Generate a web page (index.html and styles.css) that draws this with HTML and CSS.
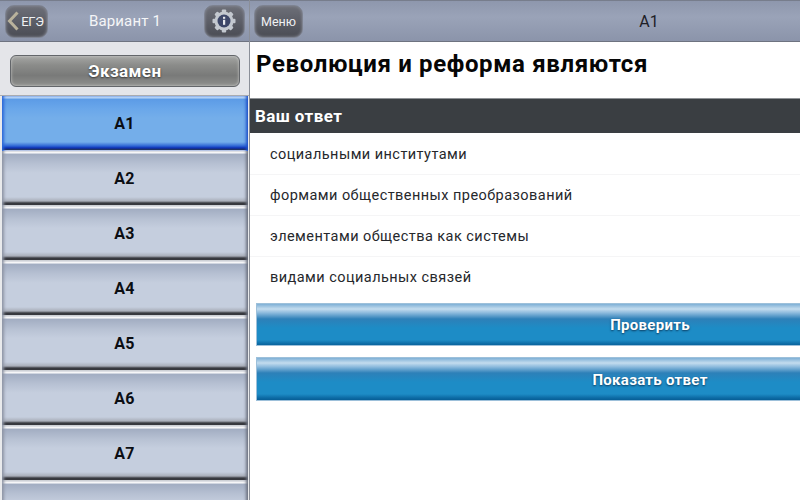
FILE: index.html
```html
<!DOCTYPE html>
<html lang="ru">
<head>
<meta charset="utf-8">
<title>Вариант 1</title>
<link rel="stylesheet" href="styles.css">
</head>
<body>
<div class="app">
  <aside class="side">
    <header class="bar side-bar">
      <button class="tool back">
        <svg class="chev" width="12" height="22" viewBox="0 0 12 22"><path d="M10.5 2.5 2.5 11l8 8.5" fill="none" stroke="#b9b29c" stroke-width="3"/></svg>
        <span>ЕГЭ</span>
      </button>
      <div class="bar-title">Вариант 1</div>
      <button class="tool gear">
        <svg width="28" height="26" viewBox="0 0 28 26">
          <g fill="#c3c8cf" transform="translate(0 -1)">
            <circle cx="14" cy="14" r="9.5"/>
            <rect x="11.8" y="2.5" width="4.4" height="23" rx="1"/>
            <rect x="11.8" y="2.5" width="4.4" height="23" rx="1" transform="rotate(45 14 14)"/>
            <rect x="11.8" y="2.5" width="4.4" height="23" rx="1" transform="rotate(90 14 14)"/>
            <rect x="11.8" y="2.5" width="4.4" height="23" rx="1" transform="rotate(135 14 14)"/>
            <circle cx="14" cy="14" r="6.5" fill="#3c4668"/>
            <rect x="13" y="12.8" width="2.2" height="5" fill="#e8eaee"/>
            <rect x="13" y="9.8" width="2.2" height="2" fill="#e8eaee"/>
          </g>
        </svg>
      </button>
    </header>
    <div class="exam-wrap"><button class="exam">Экзамен</button></div>
    <nav class="list">
      <div class="item active">A1</div>
      <div class="item">A2</div>
      <div class="item">A3</div>
      <div class="item">A4</div>
      <div class="item">A5</div>
      <div class="item">A6</div>
      <div class="item">A7</div>
      <div class="item"></div>
    </nav>
  </aside>
  <main class="main">
    <header class="bar main-bar">
      <button class="tool menu">Меню</button>
      <div class="main-title">A1</div>
    </header>
    <h1 class="question">Революция и реформа являются</h1>
    <h2 class="answer-head">Ваш ответ</h2>
    <ul class="answers">
      <li>социальными институтами</li>
      <li>формами общественных преобразований</li>
      <li>элементами общества как системы</li>
      <li>видами социальных связей</li>
    </ul>
    <div class="actions">
      <button class="action short">Проверить</button>
      <button class="action">Показать ответ</button>
    </div>
  </main>
</div>
</body>
</html>
```

FILE: styles.css
```css
* { box-sizing: border-box; }
html, body { margin: 0; height: 100%; }
body { font-family: Roboto, "Liberation Sans", sans-serif; background: #fff; overflow: hidden; }
button { font-family: inherit; margin: 0; padding: 0; cursor: pointer; }

.app { display: flex; width: 800px; height: 500px; overflow: hidden; }

.side { flex: 0 0 249px; width: 249px; height: 500px; display: flex; flex-direction: column; background: #e4e5e9; overflow: hidden; }
.main { flex: 0 0 551px; width: 551px; height: 500px; display: flex; flex-direction: column; background: #fff; overflow: hidden; border-left: 1px solid #8b8f98; }

.bar { height: 42px; flex: none; display: flex; align-items: center; background: linear-gradient(#8e97ad, #9aa3b8 40%, #8b94aa); border-bottom: 1px solid #6e7380; border-top: 1px solid #777d8c; }
.side-bar { padding: 0 4px 0 5px; justify-content: space-between; }
.main-bar { padding-left: 4px; }

.tool { height: 33px; border: 1px solid #7e8391; border-radius: 9px; background: linear-gradient(#6d6f78, #5c5e67 50%, #4a4c54); color: #f0f1f3; font-size: 13px; display: flex; align-items: center; justify-content: center; box-shadow: inset 0 0 3px #8b8e98; }
.back { width: 43px; font-size: 13px; gap: 2px; padding-right: 2px; }
.back span { letter-spacing: -.3px; }
.chev { flex: none; }
.gear { width: 41px; }
.menu { width: 49px; font-size: 12.5px; }
.bar-title { color: #f4f5f7; font-size: 15px; letter-spacing: .15px; margin-right: 2px; }
.main-title { flex: 1; text-align: center; color: #1e2026; font-size: 16px; padding-left: 195px; }

.exam-wrap { height: 54px; flex: none; display: flex; align-items: flex-start; padding: 13px 9px 0 10px; border-bottom: 1px solid #a9abb0; }
.exam { width: 230px; height: 32px; border: 1px solid #63666a; border-radius: 6px; background: linear-gradient(#a6a7a5, #8b8c8a 30%, #797a79 65%, #8e8f8d); color: #fff; font-size: 17px; font-weight: 700; letter-spacing: .4px; text-shadow: 0 1px 2px #333; box-shadow: inset 0 0 3px #cfd0ce; }

.list { flex: 1; display: flex; flex-direction: column; padding: 0 1px 0 2px; background: #e9eaec; overflow: hidden; }
.item { flex: none; height: 55px; display: flex; align-items: center; justify-content: center; padding-bottom: 1px; padding-right: 1px; color: #0b0d12; font-size: 16px; font-weight: 700; letter-spacing: .3px; background: linear-gradient(#fff 0 2px, #a2adc2 3px, #b7c1d3 13px, #c5cede 22px, #c5cede 46px, #a9aeb9 50px, #3a3c42 52px, #2f3036 54px, #e9eaec 54px); box-shadow: inset 3px 0 3px -1px #8e95a5, inset -3px 0 3px -1px #6c7280; }
.item.active { background: linear-gradient(#bcd8f8 0 2px, #5c9be6 3px, #6aa7ea 13px, #74aeea 22px, #74aeea 46px, #2e66d4 50px, #0b2fb4 52px, #2a3042 54px, #e9eaec 54px); box-shadow: inset 3px 0 3px -1px #2c68d8, inset -3px 0 3px -1px #1f52c8; }

.question { margin: 0; height: 56px; flex: none; padding: 6px 0 0 6px; font-size: 24px; line-height: 32px; font-weight: 700; color: #060606; letter-spacing: .63px; white-space: nowrap; }

.answer-head { margin: 0; height: 35px; flex: none; display: flex; align-items: center; padding-left: 5px; background: #3a3e42; color: #fff; font-size: 17px; font-weight: 700; letter-spacing: .4px; border-top: 1px solid #8f9296; }

.answers { list-style: none; margin: 0; padding: 1px 0 0; flex: none; }
.answers li { height: 41px; display: flex; align-items: center; padding-left: 20px; font-size: 14.5px; letter-spacing: .45px; color: #26282c; border-bottom: 1px solid #f5f5f6; }
.answers li:last-child { border-bottom: none; height: 40px; }

.actions { display: flex; flex-direction: column; gap: 11px; padding: 6px 0 0 6px; flex: none; width: 794px; }
.action { width: 787px; height: 44px; padding-top: 1px; border: 1px solid #9dc0da; border-right: none; color: #fff; font-size: 15px; font-weight: 700; letter-spacing: .3px; text-shadow: 0 1px 2px #0b3a5e; background: linear-gradient(#7fb0d6 0, #c3dcee 5px, #8ab9dc 9px, #2d80b8 15px, #1d8cc6 24px, #1d8cc6 36px, #0c6aa4 40px, #04588f 43px); }
.action.short { height: 43px; }
```
